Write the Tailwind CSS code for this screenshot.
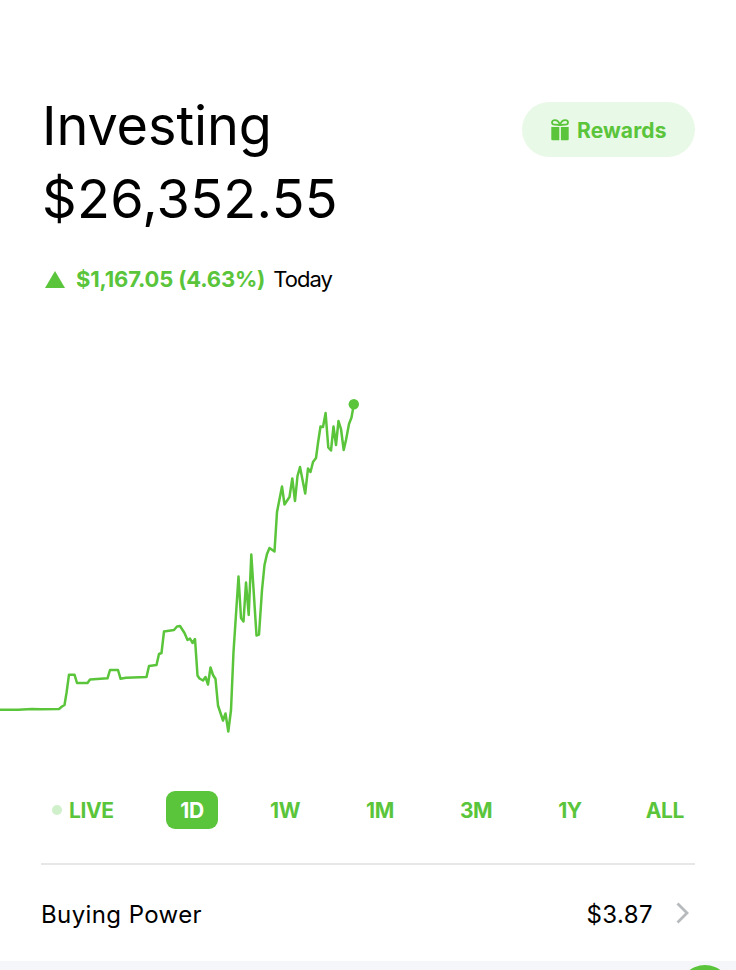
<!DOCTYPE html>
<html lang="en">
<head>
  <meta charset="utf-8">
  <title>Investing</title>
  <script src="https://cdn.jsdelivr.net/npm/@tailwindcss/browser@4"></script>
</head>
<body class="bg-white">
<div class="relative flex h-[970px] w-[736px] flex-col overflow-hidden bg-white font-['Inter',sans-serif] text-black">

  <header class="flex h-[212px] shrink-0 items-start justify-between pt-[89px] pr-[41px] pl-[42px]">
    <div class="text-[54px] leading-[73px] whitespace-nowrap">
      <h1 class="tracking-[-0.100px]">Investing</h1>
      <p class="tracking-[0.300px]">$26,352.55</p>
    </div>
    <button class="mt-[13px] flex h-[55px] w-[173px] items-center rounded-full bg-[#e9f9e7] pl-[29px] text-[#5ac53b]">
      <svg class="h-[22px] w-[18px] shrink-0" viewBox="0 0 18 22" fill="none">
        <path d="M9 6C8 3 6 1.200 3.800 1.200 2 1.200 1 2.300 1 3.500 1 4.900 2.200 5.600 3.600 5.600L9 6Zm0 0c1-3 3-4.800 5.200-4.800 1.800 0 2.800 1.100 2.800 2.300 0 1.400-1.200 2.100-2.600 2.100L9 6Z" stroke="currentColor" stroke-width="1.800"/>
        <path d="M.3 8h8V21.300H1.300a1 1 0 0 1-1-1zM9.900 8h7.800V20.300a1 1 0 0 1-1 1H9.900z" fill="currentColor"/>
      </svg>
      <span class="mt-[2px] ml-[8px] text-[21px] leading-[28px] font-bold tracking-[0.100px]">Rewards</span>
    </button>
  </header>

  <div class="mt-[52px] flex h-[31px] shrink-0 items-center pl-[45px] text-[22px] leading-[30px] whitespace-nowrap">
    <svg class="h-[17px] w-[20px] shrink-0" viewBox="0 0 20 17"><path d="M10 0 20 17H0z" fill="#5ac53b"/></svg>
    <span class="mb-[2px] ml-[11px] font-bold tracking-[-0.17px] text-[#5ac53b]">$1,167.05 (4.63%)</span>
    <span class="mb-[2px] ml-[8px] tracking-[-1px]">Today</span>
  </div>

  <svg class="mt-[75px] h-[390px] w-full shrink-0" viewBox="0 370 736 390" fill="none">
    <polyline stroke="#5ac53b" stroke-width="2.500" stroke-linejoin="round" stroke-linecap="round" points="-2,709.7 18,709.700 32,709 40,709.300 59,709 62,706.500 64.500,705 66.500,693 69,674.700 74.500,674.700 77,683 87.500,683 90,679.500 107.500,678.300 110,670 118,670 120.500,678.700 126,677.700 146.500,677 149,666 156.500,665 159,654 161.500,653 164,631.500 174,630 177,626.500 180,626 184.500,633 187.500,640 190,638.500 192.500,643 195,639 197.500,675.500 199.500,678.500 203,680.500 205.500,677 208,684.500 210.500,667.500 213,675 215.500,679 218,705.500 223,720.500 225.500,713.500 228.300,731.500 231,710 233.500,652 238.500,576.500 241,618 243.500,621.500 246,582.500 248.700,615 251.300,554.500 256.500,635.500 259,634.500 262,590 264.500,565 267,554 269.500,548 274.500,551.500 277,512 282,486.500 284.500,504.500 289.500,497 292.300,478.500 295,501 297.500,476 300,467 305.200,493.500 308,468.500 310.500,472 313,462 316,458 318,443 320.500,426.500 323,427 325.600,413 328.300,447.500 331,450.500 333.500,426.500 336,445 338.500,421 341,429 343.700,450 346,440 349,424 351.500,417.500 353.700,405"/>
    <circle cx="353.800" cy="404.200" r="5.200" fill="#5ac53b"/>
  </svg>

  <nav class="flex h-[100px] shrink-0 items-center pr-[52px] pl-[52px] text-[21px] leading-[28px] font-bold tracking-[-0.4px] text-[#5ac53b]">
    <div class="flex w-[114px] items-center"><span class="mr-[7px] size-[10px] rounded-full bg-[#cff0ca]"></span><span class="mt-px">LIVE</span></div>
    <div class="flex h-[38px] w-[52px] items-center justify-center rounded-[9px] bg-[#5ac53b] pt-px text-white">1D</div>
    <div class="mt-px ml-[52px]">1W</div>
    <div class="mt-px ml-[66px]">1M</div>
    <div class="mt-px ml-[66px]">3M</div>
    <div class="mt-px ml-[66px]">1Y</div>
    <div class="mt-px ml-auto">ALL</div>
  </nav>

  <div class="mx-[41px] mt-[3px] flex h-[98px] shrink-0 items-center border-t-2 border-[#e6e7e8] text-[24px] leading-[32px]">
    <span class="mt-[3px] tracking-[0.4px]">Buying Power</span>
    <span class="mt-[3px] ml-auto tracking-[0.4px]">$3.87</span>
    <svg class="mr-[5px] ml-[23px] h-[22px] w-[14px]" viewBox="0 0 14 22" fill="none"><path d="M1.500 1.500 11 11l-9.500 9.500" stroke="#b6babd" stroke-width="2.800"/></svg>
  </div>

  <div class="grow bg-[#f5f6fa]"></div>
  <div class="absolute top-[965px] left-[679px] size-[52px] rounded-full bg-[#5ac53b]"></div>
</div>
</body>
</html>
